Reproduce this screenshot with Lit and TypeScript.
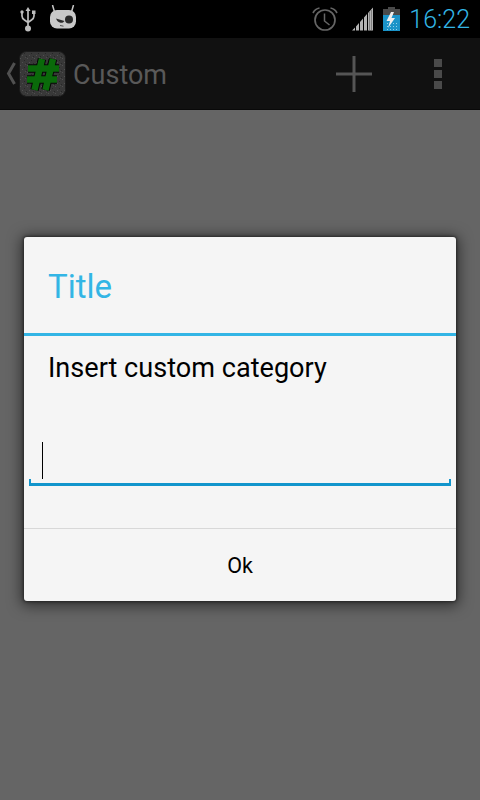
import { LitElement, html, css, svg } from 'lit';
import { customElement } from 'lit/decorators.js';

const usbIcon = svg`<svg width="16" height="25" viewBox="0 0 16 25">
  <path d="M8 2v19M2 6v3c0 2 1 3 2.500 4l3.500 2.500 3.500-2.500c1.500-1 2.500-2 2.500-4V6" fill="none" stroke="#bdbdbd" stroke-width="1.700"/>
  <path d="M8 0l2.500 4h-5z" fill="#bdbdbd"/>
  <circle cx="2" cy="5" r="1.700" fill="#bdbdbd"/>
  <rect x="12" y="3.500" width="3.500" height="3.500" fill="#bdbdbd"/>
  <circle cx="8" cy="21.500" r="3" fill="#bdbdbd"/>
</svg>`;

const cmIcon = svg`<svg width="26" height="24" viewBox="0 0 26 24">
  <path d="M4.500 7L2.500 0M21.500 7l2-7" stroke="#c6c6c6" stroke-width="1.500" fill="none"/>
  <rect x="0" y="5" width="26" height="18.500" rx="7" fill="#c9c9c9"/>
  <path d="M6 13.500l8.500 2.500c-1 1.500-2.500 2-4 1.800C8.500 17.500 7 16 6 13.500z" fill="#2a2a2a"/>
  <circle cx="19" cy="14.500" r="4" fill="#2a2a2a"/>
  <path d="M10 20.500l3.500.7" stroke="#555" stroke-width="1"/>
</svg>`;

const alarmIcon = svg`<svg width="26" height="24" viewBox="0 0 26 24">
  <circle cx="13" cy="13" r="10" fill="none" stroke="#666666" stroke-width="1.700"/>
  <path d="M12.500 6.500v7.500l5 4" fill="none" stroke="#666666" stroke-width="1.500"/>
  <path d="M1 6C2.500 3 4.500 1.500 7.500 1M25 6C23.500 3 21.500 1.500 18.500 1" fill="none" stroke="#666666" stroke-width="1.700"/>
</svg>`;

const signalIcon = svg`<svg width="22" height="24" viewBox="0 0 22 24">
  <path d="M0 23.500h3v-3zM4 23.500h3v-7.500l-3 3.500zM8 23.500h3V11.500l-3 3.500zM12 23.500h3V7l-3 3.500zM16 23.500h5V.5l-5 5.500z" fill="#b4b4b4"/>
  <path d="M17.500 23.500V5M19.500 23.500V3" stroke="#6a6a6a" stroke-width=".7"/>
</svg>`;

const batteryIcon = svg`<svg width="17" height="24" viewBox="0 0 17 24">
  <defs>
    <pattern id="charge" width="3" height="3" patternUnits="userSpaceOnUse">
      <rect x="1" y="1" width="1" height="1" fill="#8fd0ea"/>
    </pattern>
  </defs>
  <rect x="5" y="0" width="7" height="3" fill="#4a4a4a"/>
  <rect x="0" y="2" width="17" height="6" fill="#4a4a4a"/>
  <rect x="0" y="8" width="17" height="16" fill="#1a93c8"/>
  <rect x="2" y="15" width="13" height="8" fill="url(#charge)"/>
  <path d="M8 5L3.500 14H7l-2 7 7-10H8.500L11 5z" fill="#eeeeee"/>
</svg>`;

const plusIcon = svg`<svg width="36" height="36" viewBox="0 0 36 36">
  <path d="M16.500 0h3v36h-3zM0 16.500h36v3H0z" fill="#555555"/>
</svg>`;

const overflowIcon = svg`<svg width="8" height="30" viewBox="0 0 8 30">
  <rect width="8" height="8" fill="#4a4a4a"/>
  <rect y="11" width="8" height="8" fill="#4a4a4a"/>
  <rect y="22" width="8" height="8" fill="#4a4a4a"/>
</svg>`;

const backIcon = svg`<svg width="10" height="23" viewBox="0 0 10 23">
  <path d="M8.500 1L2.500 11.500l6 10.500" fill="none" stroke="#505050" stroke-width="3"/>
</svg>`;

const hashLines = 'M23 8L15.500 39M34 8L26.500 39M9 17.500H40M8 28.500H38';

const appIcon = svg`<svg width="47" height="46" viewBox="0 0 47 46">
  <defs>
    <pattern id="grain" width="7" height="7" patternUnits="userSpaceOnUse">
      <rect width="7" height="7" fill="#383838"/>
      <rect x="1" y="0" width="1" height="1" fill="#505050"/>
      <rect x="5" y="2" width="1" height="1" fill="#262626"/>
      <rect x="3" y="4" width="1" height="1" fill="#505050"/>
      <rect x="0" y="5" width="1" height="1" fill="#262626"/>
      <rect x="6" y="6" width="1" height="1" fill="#4a4a4a"/>
    </pattern>
  </defs>
  <rect x=".5" y=".5" width="46" height="45" rx="7" fill="url(#grain)" stroke="#1a1a1a"/>
  <path d="${hashLines}" fill="none" stroke="#060606" stroke-width="8.500"/>
  <path d="${hashLines}" fill="none" stroke="#0a6a0a" stroke-width="6.500"/>
</svg>`;

@customElement('app-root')
export class AppRoot extends LitElement {
  static styles = css`
    :host {
      display: flex;
      flex-direction: column;
      width: 480px;
      height: 800px;
      overflow: hidden;
      background: #656565;
      font-family: Roboto, 'Noto Sans', sans-serif;
    }

    svg {
      display: block;
    }

    .status-bar {
      flex: none;
      height: 38px;
      display: flex;
      align-items: center;
      padding: 0 10px 0 20px;
      background: #000000;
    }

    .status-left {
      display: flex;
      align-items: center;
      gap: 14px;
    }

    .cm {
      margin-top: -4px;
    }

    .status-right {
      margin-left: auto;
      display: flex;
      align-items: center;
    }

    .alarm {
      margin-right: 14px;
    }

    .signal {
      margin-right: 9px;
    }

    .clock {
      margin-left: 9px;
      font-size: 25px;
      font-weight: 300;
      color: #33b5e5;
    }

    .action-bar {
      flex: none;
      box-sizing: border-box;
      height: 72px;
      display: flex;
      align-items: center;
      padding-left: 6px;
      background: #111111;
      border-bottom: 1px solid #090909;
    }

    .app-icon {
      margin-left: 3px;
    }

    .screen-title {
      margin-left: 7px;
      padding-top: 2px;
      font-size: 27px;
      color: #595959;
    }

    .action-buttons {
      margin-left: auto;
      display: flex;
      align-items: center;
    }

    .add {
      margin-right: 62px;
    }

    .more {
      margin-right: 38px;
    }

    .content {
      flex: 1;
      padding: 127px 24px 0;
    }

    .dialog {
      height: 364px;
      display: flex;
      flex-direction: column;
      background: #f5f5f5;
      border-radius: 3px;
      box-shadow: 0 0 3px 1px rgba(0, 0, 0, 0.45), 0 2px 14px 3px rgba(0, 0, 0, 0.5);
    }

    .dialog-title {
      flex: none;
      box-sizing: border-box;
      height: 96px;
      display: flex;
      align-items: center;
      padding: 2px 0 0 24px;
      font-size: 33px;
      color: #33b5e5;
    }

    .title-rule {
      flex: none;
      height: 3px;
      background: #33b5e5;
    }

    .message {
      padding: 14px 24px 0;
      font-size: 27.1px;
      line-height: 36px;
      color: #000000;
    }

    .field {
      position: relative;
      height: 45px;
      margin: 55px 5px 0;
      background:
        linear-gradient(#1295cc, #1295cc) left bottom / 2px 7px no-repeat,
        linear-gradient(#1295cc, #1295cc) right bottom / 2px 7px no-repeat,
        linear-gradient(#1295cc, #1295cc) left bottom / 100% 3px no-repeat;
    }

    .caret {
      position: absolute;
      left: 13px;
      top: 1px;
      width: 1px;
      height: 37px;
      background: #000000;
    }

    .actions {
      margin-top: auto;
      box-sizing: border-box;
      height: 73px;
      display: flex;
      align-items: center;
      justify-content: center;
      padding-top: 1px;
      border-top: 1px solid #d8d8d8;
      font-size: 21.5px;
      color: #000000;
    }
  `;

  render() {
    return html`
      <div class="status-bar">
        <div class="status-left">${usbIcon}<span class="cm">${cmIcon}</span></div>
        <div class="status-right">
          <span class="alarm">${alarmIcon}</span>
          <span class="signal">${signalIcon}</span>
          ${batteryIcon}
          <span class="clock">16:22</span>
        </div>
      </div>
      <div class="action-bar">
        ${backIcon}
        <span class="app-icon">${appIcon}</span>
        <span class="screen-title">Custom</span>
        <div class="action-buttons">
          <span class="add">${plusIcon}</span>
          <span class="more">${overflowIcon}</span>
        </div>
      </div>
      <div class="content">
        <div class="dialog">
          <div class="dialog-title">Title</div>
          <div class="title-rule"></div>
          <div class="message">Insert custom category</div>
          <div class="field"><div class="caret"></div></div>
          <div class="actions">Ok</div>
        </div>
      </div>
    `;
  }
}
